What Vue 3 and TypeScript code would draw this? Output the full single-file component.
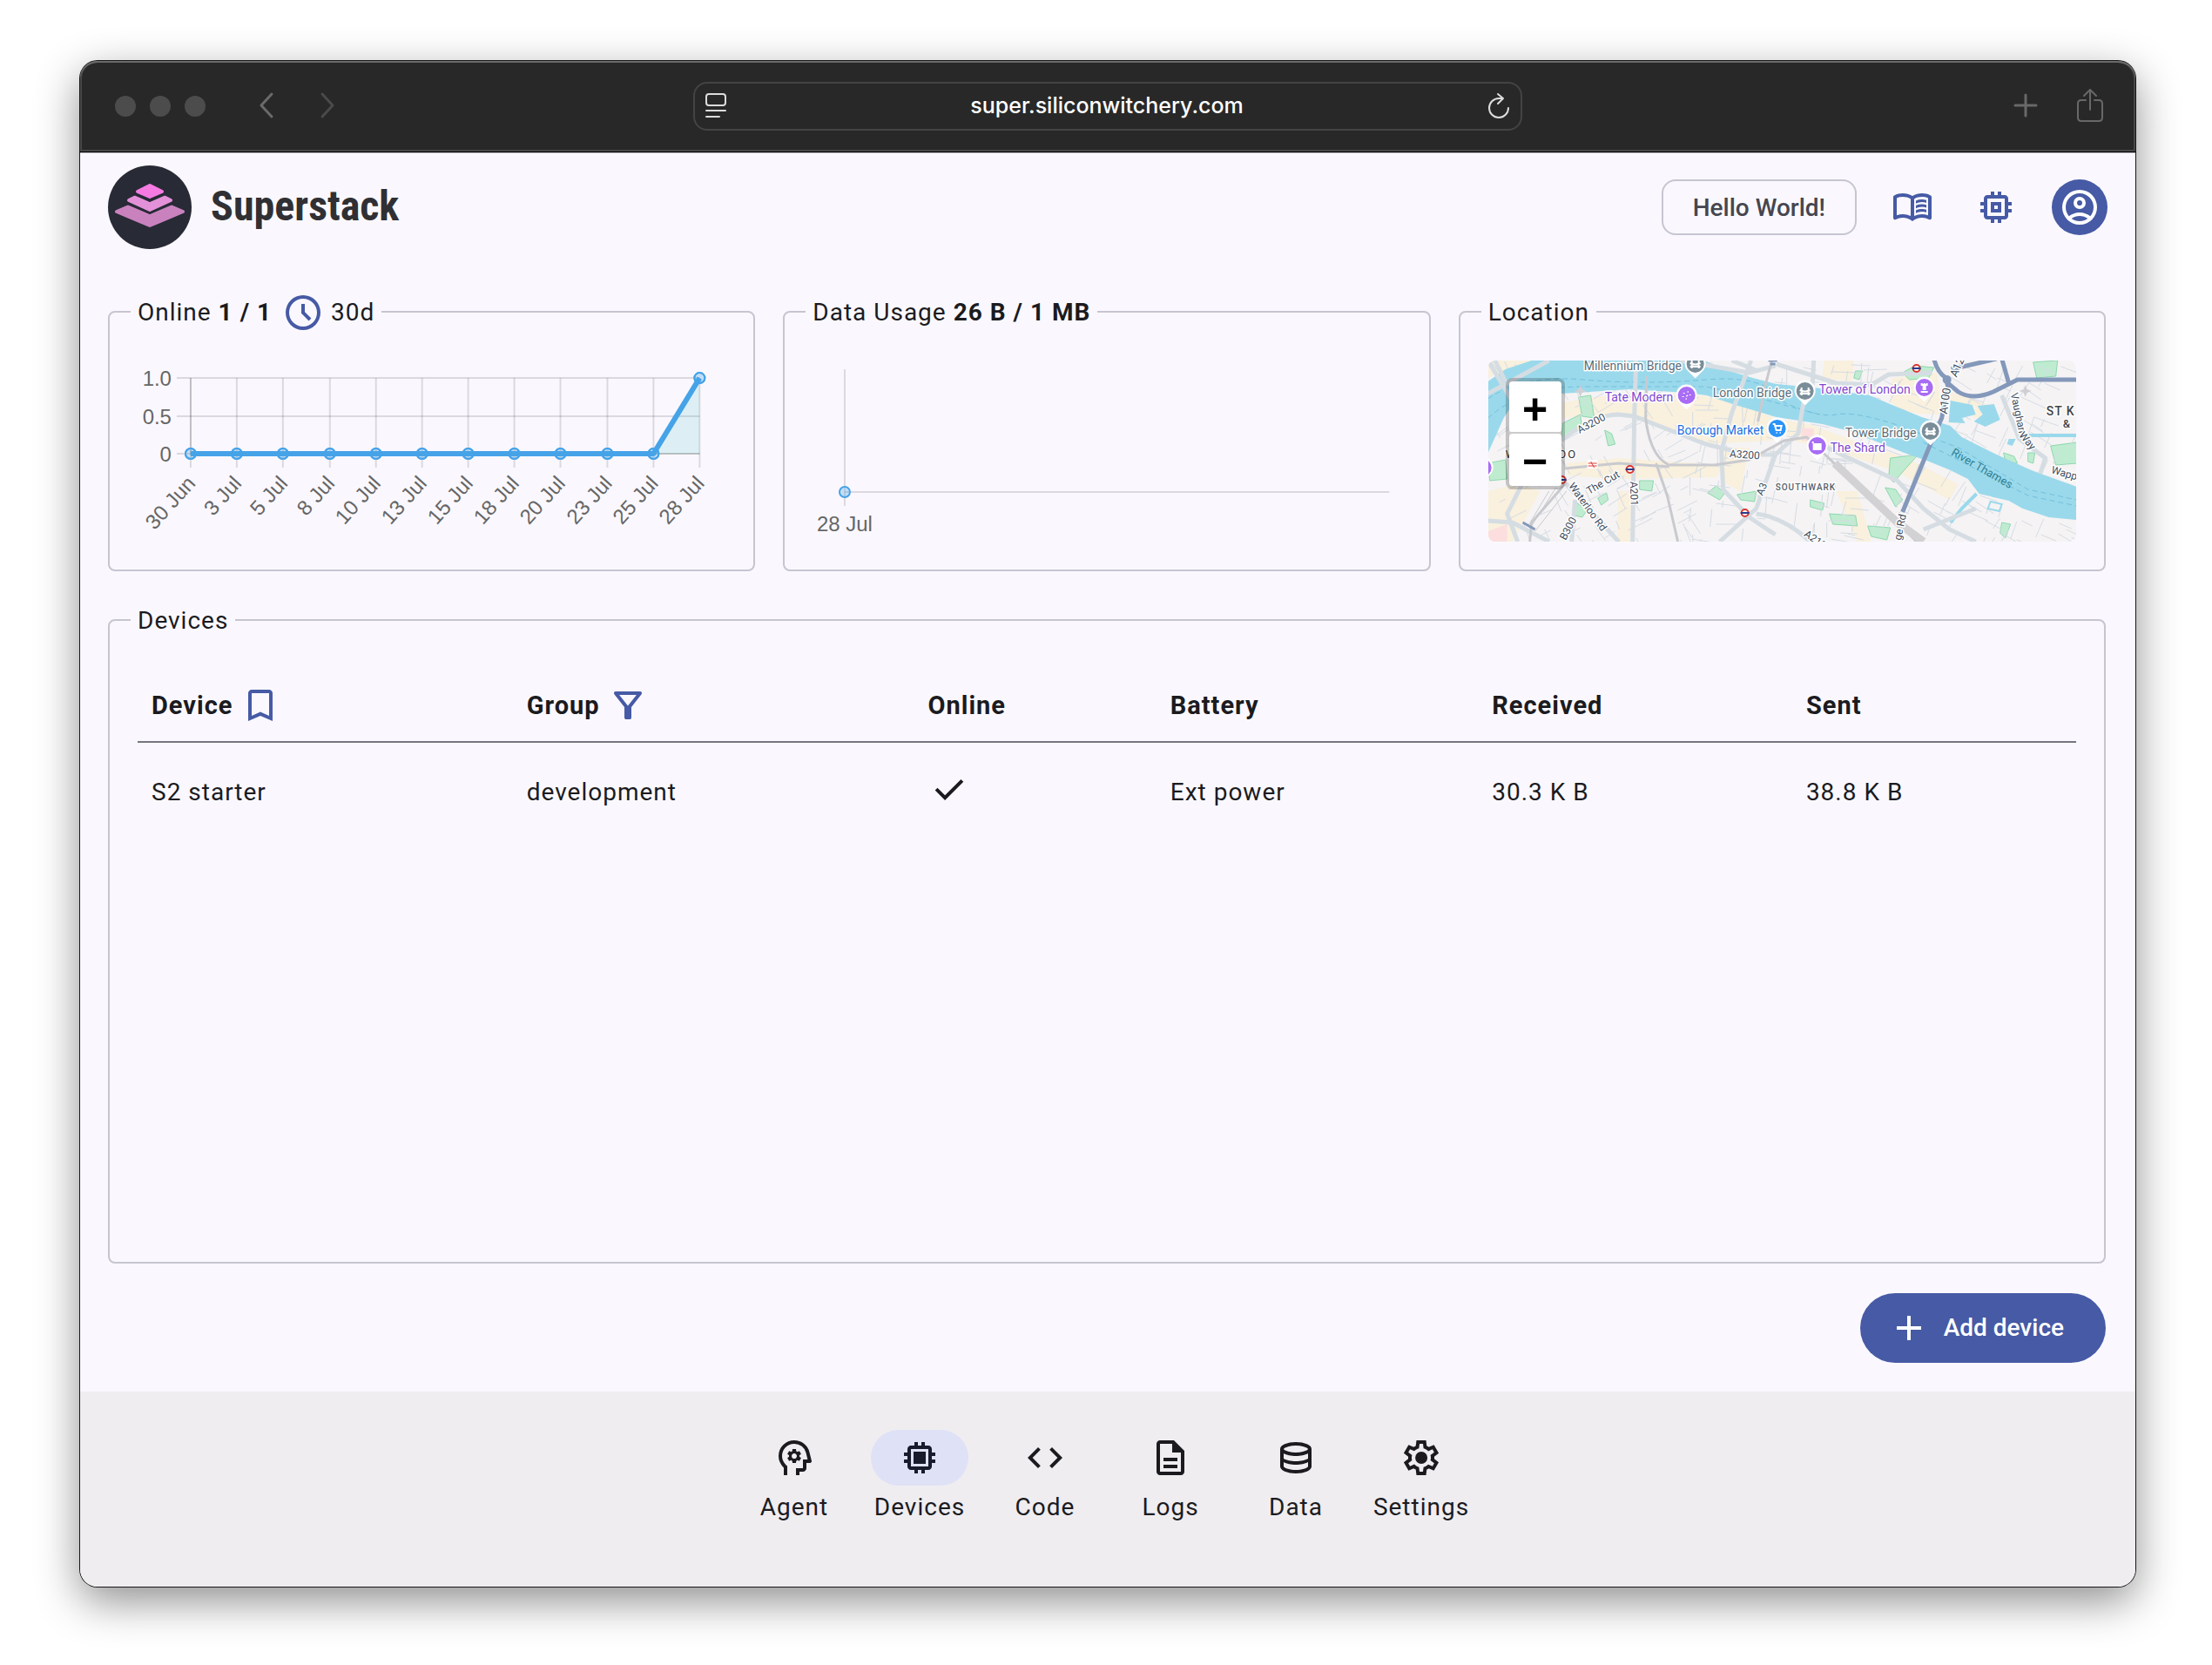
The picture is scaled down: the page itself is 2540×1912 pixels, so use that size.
<script setup lang="ts">
import { ref } from 'vue'

const icons = {
  book: 'M560-564v-68q33-14 67.5-21t72.5-7q26 0 51 4t49 10v64q-24-9-48.5-13.5T700-600q-38 0-73 9.5T560-564Zm0 220v-68q33-14 67.5-21t72.5-7q26 0 51 4t49 10v64q-24-9-48.5-13.5T700-380q-38 0-73 9t-67 27Zm0-110v-68q33-14 67.5-21t72.5-7q26 0 51 4t49 10v64q-24-9-48.5-13.5T700-490q-38 0-73 9.5T560-454ZM260-320q47 0 91.5 10.5T440-278v-394q-41-24-87-36t-93-12q-36 0-71.5 7T120-692v396q35-12 69.5-18t70.5-6Zm260 42q44-21 88.5-31.5T700-320q36 0 70.5 6t69.5 18v-396q-33-14-68.5-21t-71.5-7q-47 0-93 12t-87 36v394Zm-40 118q-48-38-104-59t-116-21q-42 0-82.5 11T100-198q-21 11-40.5-1T40-234v-482q0-11 5.5-21T62-752q46-24 96-36t102-12q58 0 113.5 15T480-740q51-30 106.5-45T700-800q52 0 102 12t96 36q11 5 16.5 15t5.5 21v482q0 23-19.5 35t-40.5 1q-37-20-77.5-31T700-240q-60 0-116 21t-104 59Z',
  memory: 'M360-360v-240h240v240H360Zm80-80h80v-80h-80v80Zm-80 320v-80h-80q-33 0-56.5-23.5T200-280v-80h-80v-80h80v-80h-80v-80h80v-80q0-33 23.5-56.5T280-760h80v-80h80v80h80v-80h80v80h80q33 0 56.5 23.5T760-680v80h80v80h-80v80h80v80h-80v80q0 33-23.5 56.5T680-200h-80v80h-80v-80h-80v80h-80Zm320-160v-400H280v400h400Z',
  memoryFilled: 'M340-340v-280h280v280H340Zm20 220v-80h-80q-33 0-56.5-23.5T200-280v-80h-80v-80h80v-80h-80v-80h80v-80q0-33 23.5-56.5T280-760h80v-80h80v80h80v-80h80v80h80q33 0 56.5 23.5T760-680v80h80v80h-80v80h80v80h-80v80q0 33-23.5 56.5T680-200h-80v80h-80v-80h-80v80h-80Zm320-160v-400H280v400h400Z',
  account: 'M234-276q51-39 114-61.5T480-360q69 0 132 22.5T726-276q35-41 54.5-93T800-480q0-133-93.5-226.5T480-800q-133 0-226.5 93.5T160-480q0 59 19.5 111t54.5 93Zm246-164q-59 0-99.5-40.5T340-580q0-59 40.5-99.5T480-720q59 0 99.5 40.5T620-580q0 59-40.5 99.5T480-440Zm0 360q-83 0-156-31.5T197-197q-54-54-85.5-127T80-480q0-83 31.5-156T197-763q54-54 127-85.5T480-880q83 0 156 31.5T763-763q54 54 85.5 127T880-480q0 83-31.5 156T763-197q-54 54-127 85.5T480-80Zm0-80q53 0 100-15.5t86-44.5q-39-29-86-44.5T480-280q-53 0-100 15.5T294-220q39 29 86 44.5T480-160Zm0-360q26 0 43-17t17-43q0-26-17-43t-43-17q-26 0-43 17t-17 43q0 26 17 43t43 17Z',
  schedule: 'm612-292 56-56-148-148v-184h-80v216l172 172ZM480-80q-83 0-156-31.5T197-197q-54-54-85.5-127T80-480q0-83 31.5-156T197-763q54-54 127-85.5T480-880q83 0 156 31.5T763-763q54 54 85.5 127T880-480q0 83-31.5 156T763-197q-54 54-127 85.5T480-80Zm0-80q133 0 226.5-93.5T800-480q0-133-93.5-226.5T480-800q-133 0-226.5 93.5T160-480q0 133 93.5 226.5T480-160Z',
  bookmark: 'M200-120v-640q0-33 23.5-56.5T280-840h400q33 0 56.5 23.5T760-760v640L480-240 200-120Zm80-122 200-86 200 86v-518H280v518Z',
  filter: 'M440-160q-17 0-28.5-11.5T400-200v-240L168-736q-15-20-4.5-42t36.5-22h560q26 0 36.5 22t-4.5 42L560-440v240q0 17-11.5 28.5T520-160h-80Zm40-308 198-252H282l198 252Z',
  check: 'M382-240 154-468l57-57 171 171 367-367 57 57-424 424Z',
  add: 'M440-440H200v-80h240v-240h80v240h240v80H520v240h-80v-240Z',
  agent: 'M440-360h80l6-50q8-3 14.5-7t11.5-9l46 20 40-68-40-30q2-8 2-16t-2-16l40-30-40-68-46 20q-5-5-11.5-9t-14.5-7l-6-50h-80l-6 50q-8 3-14.5 7t-11.5 9l-46-20-40 68 40 30q-2 8-2 16t2 16l-40 30 40 68 46-20q5 5 11.5 9t14.5 7l6 50Zm40-100q-25 0-42.5-17.5T420-520q0-25 17.5-42.5T480-580q25 0 42.5 17.5T540-520q0 25-17.5 42.5T480-460ZM240-80v-172q-57-52-88.5-121.5T120-520q0-150 105-255t255-105q125 0 221.5 73.5T827-615l52 205q5 19-7 34.5T840-360h-80v120q0 33-23.5 56.5T680-160h-80v80h-80v-160h160v-200h108l-38-155q-23-91-98-148t-172-57q-116 0-198 81t-82 197q0 60 24.5 114t69.5 96l26 24v208h-80Z',
  code: 'M320-240 80-480l240-240 57 57-184 184 183 183-56 56Zm320 0-57-57 184-184-183-183 56-56 240 240-240 240Z',
  logs: 'M320-240h320v-80H320v80Zm0-160h320v-80H320v80ZM240-80q-33 0-56.5-23.5T160-160v-640q0-33 23.5-56.5T240-880h320l240 240v480q0 33-23.5 56.5T720-80H240Zm280-520v-200H240v640h480v-440H520Z',
  data: 'M480-120q-151 0-255.5-46.5T120-280v-400q0-66 105.5-113T480-840q149 0 254.5 47T840-680v400q0 67-104.5 113.5T480-120Zm0-479q89 0 179-25.5T760-679q-11-29-100.5-55T480-760q-91 0-178.5 25.5T200-679q14 30 101.5 55T480-599Zm0 199q42 0 81-4t74.5-11.5q35.5-7.5 67-18.5t57.5-25v-120q-26 14-57.5 25t-67 18.5Q600-528 561-524t-81 4q-42 0-82-4t-75.5-11.5Q287-543 256-554t-56-25v120q25 14 56 25t66.5 18.5Q358-408 398-404t82 4Zm0 200q46 0 93.5-7t87.5-18.5q40-11.5 67-26t32-29.5v-98q-26 14-57.5 25t-67 18.5Q600-328 561-324t-81 4q-42 0-82-4t-75.5-11.5Q287-343 256-354t-56-25v99q5 15 31.5 29t66.5 25.5q40 11.5 88 18.5t94 7Z',
  settings: 'm370-80-16-128q-13-5-24.5-12T307-235l-119 50L78-375l103-78q-1-7-1-13.5v-27q0-6.5 1-13.5L78-585l110-190 119 50q11-8 23-15t24-12l16-128h220l16 128q13 5 24.5 12t22.5 15l119-50 110 190-103 78q1 7 1 13.5v27q0 6.5-2 13.5l103 78-110 190-118-50q-11 8-23 15t-24 12L590-80H370Zm70-80h79l14-106q31-8 57.5-23.5T639-327l99 41 39-68-86-65q5-14 7-29.5t2-31.5q0-16-2-31.5t-7-29.5l86-65-39-68-99 42q-22-23-48.5-38.5T533-694l-13-106h-79l-14 106q-31 8-57.5 23.5T321-633l-99-41-39 68 86 64q-5 15-7 30t-2 32q0 16 2 31t7 30l-86 65 39 68 99-42q22 23 48.5 38.5T427-266l13 106Zm42-180q58 0 99-41t41-99q0-58-41-99t-99-41q-59 0-99.5 41T342-480q0 58 40.5 99t99.5 41Z',
}

const address = ref('super.siliconwitchery.com')

interface NavItem { label: string; icon: string }
const nav: NavItem[] = [
  { label: 'Agent', icon: icons.agent },
  { label: 'Devices', icon: icons.memoryFilled },
  { label: 'Code', icon: icons.code },
  { label: 'Logs', icon: icons.logs },
  { label: 'Data', icon: icons.data },
  { label: 'Settings', icon: icons.settings },
]
const current = ref('Devices')

const devices = [
  { name: 'S2 starter', group: 'development', online: true, battery: 'Ext power', received: '30.3 K B', sent: '38.8 K B' },
]

// Online chart
const days = ['30 Jun', '3 Jul', '5 Jul', '8 Jul', '10 Jul', '13 Jul', '15 Jul', '18 Jul', '20 Jul', '23 Jul', '25 Jul', '28 Jul']
const onlineCounts = [0, 0, 0, 0, 0, 0, 0, 0, 0, 0, 0, 1]
const plot = { left: 61, right: 646, top: 20, bottom: 107 }
const points = onlineCounts.map((v, i) => ({
  x: Math.round(plot.left + (i * (plot.right - plot.left)) / (days.length - 1)),
  y: plot.bottom - v * (plot.bottom - plot.top),
  label: days[i],
}))
const line = points.map(p => `${p.x},${p.y}`).join(' ')
const yTicks = [
  { label: '1.0', y: 20 },
  { label: '0.5', y: 64 },
  { label: '0', y: 107 },
]

// Side streets: short deterministic segments that follow the local street grid
let seed = 11
const rand = () => (seed = (seed * 16807) % 2147483647) / 2147483647
const streets = Array.from({ length: 420 }, () => {
  const x = rand() * 676
  const y = rand() * 208
  const base = x < 230 ? -0.5 : x < 450 ? 0.12 : 0.45
  const a = base + (rand() > 0.5 ? Math.PI / 2 : 0) + (rand() - 0.5) * 0.3
  const l = 8 + rand() * 24
  return `M${x.toFixed(0)} ${y.toFixed(0)}l${(Math.cos(a) * l).toFixed(0)} ${(Math.sin(a) * l).toFixed(0)}`
}).join('')

const shopping = [
  'M86 48L140 40 230 38 270 44 330 66 326 92 250 96 210 78 150 62 86 66Z',
  'M0 150L34 142 60 150 28 208 0 208Z',
  'M60 0L0 0 0 20 28 8Z',
  'M90 118L150 112 240 118 270 122 262 134 150 136 92 132Z',
  'M270 100L300 100 290 150 270 140Z',
  'M150 150L165 150 163 208 148 208Z',
  'M326 66L372 74 420 92 480 112 540 142 530 160 470 128 400 104 350 92Z',
  'M464 20L516 14 520 62 480 60 462 48Z',
  'M400 150L424 150 440 208 424 208Z',
  'M386 0L420 0 418 24 384 20Z',
  'M530 36L572 50 566 66 556 66 560 54 530 46Z',
]
const parks = [
  'M104 42L118 40 122 66 108 64Z', 'M86 72L106 62 108 78 84 90Z', 'M134 80L142 84 146 96 138 98Z',
  'M0 118L20 114 22 136 2 138Z', 'M174 138L190 138 188 150 174 148Z', 'M126 158L136 152 138 160 130 166Z',
  'M100 162L114 172 108 180 100 178Z', 'M252 152L262 144 272 152 266 160Z', 'M286 154L308 150 306 162 290 160Z',
  'M370 160L386 164 384 172 370 168Z', 'M392 176L422 178 424 190 396 188Z', 'M436 190L462 192 458 206 440 202Z',
  'M462 112L494 108 476 128 466 140 460 134Z', 'M456 146L468 148 476 160 468 168Z', 'M476 14L490 6 512 8 506 20 484 22Z',
  'M626 2L654 0 652 18 630 20Z', 'M646 98L676 94 676 118 652 120Z', 'M592 106L604 110 608 118 594 116Z',
  'M590 186L600 188 594 204 588 198Z', 'M422 12L430 12 426 22 420 20Z', 'M620 106L628 106 626 118 620 116Z',
]
const mainRoads = [
  'M0 38L70 0', 'M0 0L30 50', 'M8 0L20 24', 'M170 0L168 64 166 208', 'M84 92Q120 62 150 62L168 64 250 96 300 108 330 108',
  'M302 0L280 60 268 104 270 148 300 180 330 200', 'M330 108L356 84 362 50 372 40 374 0',
  'M330 108L308 170 266 208', 'M308 176Q340 180 370 208', 'M88 140L150 208', 'M40 140L22 176 34 208',
  'M0 184L28 186 70 208', 'M331 4L400 26 440 28 460 16 510 14', 'M370 90L410 110 470 138 500 170 530 194 560 208',
  'M500 194L560 170', 'M220 0L300 14 330 6', 'M100 160L96 208', 'M634 130L640 112 610 90 590 40', 'M280 0L310 12',
]
const thickRoads = [
  'M512 -2Q516 14 526 20L528 30 521 66 508 96 476 174', 'M528 26L540 36Q556 46 580 36L608 22 676 22', 'M590 -2L598 26', 'M532 10L584 -2',
]
const rails = [
  'M182 18L181 66Q186 110 208 120L260 120 300 114 340 92 366 88 410 130 450 164 492 208', 'M88 124L150 118 208 122',
  'M193 118L206 156 218 208', 'M48 208L50 186 90 140', 'M326 0L318 30 310 70',
]

interface Place { text: string; x: number; y: number; color: string; size?: number; spacing?: string; rotate?: number; weight?: number }
const violet = '#8048d0'
const slate = '#5a6f7c'
const ink = '#404c5c'
const places: Place[] = [
  { text: 'Millennium Bridge', x: 110, y: 11, color: slate },
  { text: 'Tate Modern', x: 134, y: 47, color: violet },
  { text: 'London Bridge', x: 258, y: 42, color: slate },
  { text: 'Borough Market', x: 217, y: 85, color: '#1a6fe0' },
  { text: 'Tower of London', x: 380, y: 38, color: violet },
  { text: 'Tower Bridge', x: 410, y: 88, color: slate },
  { text: 'The Shard', x: 393, y: 105, color: violet },
  { text: 'SOUTHWARK', x: 330, y: 149, color: '#56606a', size: 10, weight: 500, spacing: '1px' },
  { text: 'WATERLOO', x: 20, y: 112, color: '#333', size: 13, spacing: '2px' },
  { text: 'ST K', x: 641, y: 63, color: '#444', size: 14, weight: 500, spacing: '1px' },
  { text: '&', x: 660, y: 77, color: '#444', size: 13, weight: 500 },
  { text: 'A3200', x: 105, y: 84, color: ink, size: 12, rotate: -28 },
  { text: 'A3200', x: 277, y: 111, color: ink, size: 12, rotate: 4 },
  { text: 'The Cut', x: 116, y: 154, color: ink, size: 12, rotate: -30 },
  { text: 'A201', x: 163, y: 139, color: ink, size: 12, rotate: 88 },
  { text: 'Waterloo Rd', x: 92, y: 144, color: ink, size: 12, rotate: 54 },
  { text: 'B300', x: 89, y: 207, color: ink, size: 12, rotate: -62 },
  { text: 'A3', x: 315, y: 156, color: ink, size: 12, rotate: -66 },
  { text: 'A219', x: 362, y: 201, color: ink, size: 12, rotate: 34 },
  { text: 'A100', x: 527, y: 62, color: ink, size: 13, rotate: -82 },
  { text: 'A12', x: 538, y: 20, color: ink, size: 13, rotate: -66 },
  { text: 'Vaughan', x: 600, y: 38, color: ink, size: 12, rotate: 78 },
  { text: 'Way', x: 609, y: 86, color: ink, size: 12, rotate: 50 },
  { text: 'Wappi', x: 646, y: 129, color: ink, size: 12, rotate: 16 },
  { text: 'ge Rd', x: 474, y: 207, color: ink, size: 12, rotate: -78 },
]
const pins = [
  { x: 238, y: 4, color: '#7a8e99', kind: 'bridge' },
  { x: 228, y: 40, color: '#a86cf5', kind: 'palette' },
  { x: 364, y: 35, color: '#7a8e99', kind: 'bridge' },
  { x: 332, y: 78, color: '#2a93f8', kind: 'cart' },
  { x: 378, y: 98, color: '#a86cf5', kind: 'camera' },
  { x: 501, y: 31, color: '#a86cf5', kind: 'tower' },
  { x: 508, y: 81, color: '#7a8e99', kind: 'bridge' },
  { x: -6, y: 123, color: '#a86cf5', kind: 'none' },
]
const pinGlyphs: Record<string, string> = {
  bridge: 'M-4-4V5M4-4V5M-6 3H6M-6-1Q0 2 6-1',
  palette: 'M-3-3L-3-2M1-4L2-4M4-1L4 0M-4 1L-4 2M-1 4L0 4M0 0L1 1',
  cart: 'M-5-5H-3L-1 2H4L5-3H-2M-1 5H0M3 5H4',
  camera: 'M-4-2H4V4H-4ZM-2 0H2V2H-2ZM-5-5V-3',
  tower: 'M-3-5V-3H3V-5M0-5V-3M-1-2V3M1-2V3M-4 5H4',
  none: '',
}
const stations = [
  { x: 163, y: 125 }, { x: 85, y: 137 }, { x: 295, y: 175 }, { x: 492, y: 9 },
]
</script>

<template>
  <div class="desktop">
    <div class="window">
      <div class="chrome">
        <div class="chrome-side">
          <span class="light"></span><span class="light"></span><span class="light"></span>
          <button class="bare back" type="button" aria-label="Back">
            <svg width="24" height="32" viewBox="0 0 24 32"><path d="M18 3L6 16 18 29" fill="none" stroke="#6a6a6a" stroke-width="3" stroke-linecap="round" stroke-linejoin="round" /></svg>
          </button>
          <button class="bare" type="button" aria-label="Forward">
            <svg width="24" height="32" viewBox="0 0 24 32"><path d="M6 3L18 16 6 29" fill="none" stroke="#4a4a4a" stroke-width="3" stroke-linecap="round" stroke-linejoin="round" /></svg>
          </button>
        </div>
        <div class="address">
          <button class="bare" type="button" aria-label="Page menu">
            <svg width="24" height="30" viewBox="0 0 24 30" fill="none" stroke="#dcdcdc" stroke-width="2" stroke-linecap="round"><rect x="1" y="2" width="22" height="13" rx="3" /><path d="M1 21H23M1 28H16" /></svg>
          </button>
          <input v-model="address" type="text" aria-label="Address" spellcheck="false" />
          <button class="bare" type="button" aria-label="Reload">
            <svg width="26" height="30" viewBox="0 0 26 30" fill="none" stroke="#dcdcdc" stroke-width="2" stroke-linecap="round" stroke-linejoin="round"><path d="M13 7A11 11 0 1 0 24 18M12 2L18 7 12 13M13 7H17" /></svg>
          </button>
        </div>
        <div class="chrome-side chrome-end">
          <button class="bare" type="button" aria-label="New tab">
            <svg width="28" height="28" viewBox="0 0 28 28"><path d="M14 2V26M2 14H26" stroke="#686868" stroke-width="3" stroke-linecap="round" /></svg>
          </button>
          <button class="bare" type="button" aria-label="Share">
            <svg width="32" height="40" viewBox="0 0 32 40" fill="none" stroke="#686868" stroke-width="2" stroke-linecap="round" stroke-linejoin="round"><path d="M11 14H6Q2 14 2 18V34Q2 38 6 38H26Q30 38 30 34V18Q30 14 26 14H21M16 25V3M9 9L16 2 23 9" /></svg>
          </button>
        </div>
      </div>

      <div class="page">
        <header class="topbar">
          <svg class="logo" viewBox="0 0 96 96" aria-hidden="true">
            <circle cx="48" cy="48" r="48" fill="#282a36" />
            <g stroke-width="4" stroke-linejoin="round">
              <path d="M10 53L24 47 48 58 72 47 86 53 48 69Z" fill="#c982be" stroke="#c982be" />
              <path d="M24 40L32 36 48 44 64 36 72 40 48 51Z" fill="#e391d8" stroke="#e391d8" />
              <path d="M34 30L48 23 62 30 48 36Z" fill="#f57ae1" stroke="#f57ae1" />
            </g>
            <path d="M20 43L48 55 76 43M30 33L48 41 66 33" fill="none" stroke="#282a36" stroke-width="2" />
          </svg>
          <h1>Superstack</h1>
          <button class="chip" type="button">Hello World!</button>
          <button class="round" type="button" aria-label="Documentation"><svg class="icon" viewBox="0 -960 960 960"><path :d="icons.book" /></svg></button>
          <button class="round" type="button" aria-label="Devices"><svg class="icon" viewBox="0 -960 960 960"><path :d="icons.memory" /></svg></button>
          <button class="round filled" type="button" aria-label="Account"><svg class="icon" viewBox="0 -960 960 960"><path :d="icons.account" /></svg></button>
        </header>

        <main>
          <div class="cards">
            <fieldset>
              <legend>
                <span>Online <b>1 / 1</b></span>
                <button class="range" type="button"><svg class="icon" viewBox="0 -960 960 960"><path :d="icons.schedule" /></svg>30d</button>
              </legend>
              <svg class="chart" viewBox="0 0 676 208" role="img" aria-label="Devices online">
                <g class="grid">
                  <path v-for="t in yTicks" :key="t.label" :d="`M45 ${t.y}H646`" />
                  <path v-for="p in points" :key="p.label" :d="`M${p.x} 20V123`" />
                  <path d="M61 20V107H646" />
                </g>
                <polygon :points="`${line} 646,107`" fill="#4bc0c0" fill-opacity=".16" />
                <g class="point">
                  <circle v-for="p in points" :key="p.label" :cx="p.x" :cy="p.y" r="6" />
                </g>
                <polyline :points="line" fill="none" stroke="#46a3e8" stroke-width="6" stroke-linejoin="round" />
                <g class="point ring">
                  <circle v-for="p in points" :key="p.label" :cx="p.x" :cy="p.y" r="6" />
                </g>
                <text v-for="t in yTicks" :key="t.label" x="39" :y="t.y + 9" text-anchor="end">{{ t.label }}</text>
                <text v-for="p in points" :key="p.label" :transform="`translate(${p.x} 136) rotate(-48)`" y="9" text-anchor="end">{{ p.label }}</text>
              </svg>
            </fieldset>

            <fieldset>
              <legend><span>Data Usage <b>26 B / 1 MB</b></span></legend>
              <svg class="chart" viewBox="0 0 676 208" role="img" aria-label="Data usage">
                <g class="grid"><path d="M37 10V167" /><path d="M37 151H663" /></g>
                <g class="point"><circle cx="37" cy="151" r="6" /></g>
                <text x="37" y="196" text-anchor="middle">28 Jul</text>
              </svg>
            </fieldset>

            <fieldset>
              <legend>Location</legend>
              <div class="map">
                <svg viewBox="0 0 676 208" preserveAspectRatio="xMidYMid slice" role="img" aria-label="Map of London">
                  <rect width="676" height="208" fill="#f5f3f4" />
                  <path v-for="d in shopping" :key="d" :d="d" fill="#f9f0dd" />
                  <path v-for="d in parks" :key="d" :d="d" fill="#bfecd0" stroke="#8fd6b0" />
                  <path :d="streets" stroke="#d5dce4" fill="none" />
                  <path d="M360 78h14v14h-14zM0 196l22-8v20H0z" fill="#fbdedd" />
                  <path d="M0 24L20 10 50 0H248L271 10 304 20 331 27 374 31 438 40 464 51 498 65 531 75 544 88 584 108 624 126 676 145V183L644 180 614 170 598 161 564 153 551 136 531 126 504 115 478 106 441 91 411 80 384 73 331 65 284 51 251 40 228 37 164 33 84 38 30 48 18 66 0 106Z" fill="#9ad9eb" />
                  <path d="M531 46L556 51 560 62 544 66 548 72 529 71ZM562 52L581 50 588 68 571 76 558 70 568 62ZM598 90L606 90 602 98 596 96Z" fill="#9ad9eb" />
                  <path d="M561 153L544 170 531 186M620 86H676" fill="none" stroke="#9ad9eb" stroke-width="4" />
                  <path d="M574 170l3-8 13 3-3 8z" fill="none" stroke="#9ad9eb" stroke-width="2" />
                  <path d="M0 44Q40 16 110 22T250 22 340 48Q380 66 400 62T470 74L540 100 620 148 676 160M0 66Q40 30 110 30T250 30L300 40 380 62M500 94L620 155 676 167" fill="none" stroke="#72bfdc" stroke-dasharray="6 4" />
                  <g fill="none" stroke="#d5dde3" stroke-linejoin="round">
                    <path v-for="d in mainRoads" :key="d" :d="d" stroke-width="5" />
                  </g>
                  <g fill="none" stroke="#c9cacf" stroke-linejoin="round">
                    <path v-for="d in rails" :key="d" :d="d" stroke-width="3" />
                    <path d="M398 118L470 186 500 208" stroke-width="9" stroke="#d2d2d5" />
                    <path d="M50 190L78 146M54 196L90 150M46 190L70 150" />
                  </g>
                  <g fill="none" stroke="#8398ba" stroke-linejoin="round">
                    <path v-for="d in thickRoads" :key="d" :d="d" stroke-width="5" />
                    <path d="M322 0H332M324 4H330M40 186L54 194" stroke-width="3" />
                  </g>
                  <circle cx="527" cy="22" r="5" fill="#8398ba" />
                  <path d="M106 28l2 5 5 2-5 2-2 5-2-5-5-2 5-2zM617 28l2 5 5 2-5 2-2 5-2-5-5-2 5-2z" fill="#d0d0d4" />
                  <g v-for="s in stations" :key="s.x" fill="none">
                    <circle :cx="s.x" :cy="s.y" r="4" fill="#fff" stroke="#d8372f" stroke-width="2" />
                    <path :d="`M${s.x - 5} ${s.y}h10`" stroke="#2a3a8c" stroke-width="2" />
                  </g>
                  <rect x="114" y="114" width="12" height="10" fill="#fff" /><path d="M115 118H125M115 121H125M118 116L122 123" stroke="#e03a34" />
                  <text
                    v-for="(p, i) in places" :key="i" class="place"
                    :transform="`translate(${p.x} ${p.y}) rotate(${p.rotate ?? 0})`"
                    :fill="p.color" :font-size="p.size ?? 14" :font-weight="p.weight ?? 400" :letter-spacing="p.spacing ?? '0'"
                  >{{ p.text }}</text>
                  <text class="water" transform="translate(531 108) rotate(30)">River Thames</text>
                  <g v-for="(p, i) in pins" :key="i" :transform="`translate(${p.x} ${p.y})`">
                    <path d="M0 15L-8 7A11 11 0 1 1 8 7Z" fill="#fff" stroke="#fff" stroke-width="2" stroke-linejoin="round" />
                    <circle r="10" :fill="p.color" />
                    <path :d="pinGlyphs[p.kind]" fill="none" stroke="#fff" stroke-width="2" />
                  </g>
                </svg>
                <div class="zoom">
                  <button type="button" aria-label="Zoom in">+</button>
                  <button type="button" aria-label="Zoom out">−</button>
                </div>
              </div>
            </fieldset>
          </div>

          <fieldset class="devices">
            <legend>Devices</legend>
            <table>
              <colgroup><col class="c-device" /><col class="c-group" /><col class="c-online" /><col class="c-battery" /><col class="c-received" /><col /></colgroup>
              <thead>
                <tr>
                  <th scope="col"><div class="head">Device<button class="bare" type="button" aria-label="Sort devices"><svg class="icon" viewBox="0 -960 960 960"><path :d="icons.bookmark" /></svg></button></div></th>
                  <th scope="col"><div class="head">Group<button class="bare" type="button" aria-label="Filter groups"><svg class="icon" viewBox="0 -960 960 960"><path :d="icons.filter" /></svg></button></div></th>
                  <th scope="col">Online</th>
                  <th scope="col">Battery</th>
                  <th scope="col">Received</th>
                  <th scope="col">Sent</th>
                </tr>
              </thead>
              <tbody>
                <tr v-for="d in devices" :key="d.name">
                  <td>{{ d.name }}</td>
                  <td>{{ d.group }}</td>
                  <td><svg v-if="d.online" class="icon tick" viewBox="0 -960 960 960" role="img" aria-label="Online"><path :d="icons.check" /></svg></td>
                  <td>{{ d.battery }}</td>
                  <td>{{ d.received }}</td>
                  <td>{{ d.sent }}</td>
                </tr>
              </tbody>
            </table>
          </fieldset>

          <div class="actions">
            <button class="primary" type="button"><svg class="icon" viewBox="0 -960 960 960"><path :d="icons.add" /></svg>Add device</button>
          </div>
        </main>
      </div>

      <nav class="tabs">
        <a v-for="item in nav" :key="item.label" href="#" :class="{ active: item.label === current }" @click.prevent="current = item.label">
          <span class="pill"><svg class="icon" viewBox="0 -960 960 960"><path :d="item.icon" /></svg></span>
          <span>{{ item.label }}</span>
        </a>
      </nav>
    </div>
  </div>
</template>

<style>
body {
  margin: 0;
  background: #fff;
}
</style>

<style scoped>
* {
  box-sizing: border-box;
}
.desktop {
  display: flex;
  min-height: 100vh;
  padding: 70px 88px 90px 92px;
  overflow: hidden;
  font: 400 28px/40px Roboto, sans-serif;
  color: #1b1b1f;
}
.window {
  flex: 1;
  min-width: 0;
  display: flex;
  flex-direction: column;
  border-radius: 20px;
  box-shadow: 0 0 0 1px #161616, 0 16px 50px rgba(0, 0, 0, 0.45);
}
button {
  font: inherit;
  color: inherit;
  border: 0;
  padding: 0;
  background: none;
  cursor: pointer;
}
.bare {
  display: flex;
}
.icon {
  width: 48px;
  height: 48px;
  flex: none;
  display: block;
  fill: currentColor;
}

/* Browser chrome */
.chrome {
  display: grid;
  grid-template-columns: 1fr 952px 1fr;
  align-items: center;
  height: 105px;
  padding: 0 36px;
  border-bottom: 1px solid #000;
  border-radius: 20px 20px 0 0;
  background: #282828;
  box-shadow: inset 0 2px #6a6a6a, inset 0 0 0 2px #484848;
}
.chrome-side {
  display: flex;
  align-items: center;
  gap: 16px;
  padding-left: 4px;
}
.light {
  width: 24px;
  height: 24px;
  border-radius: 50%;
  background: #4c4c4c;
}
.chrome .bare,
.address input {
  margin-bottom: 2px;
}
.chrome .back {
  margin-left: 42px;
  margin-right: 30px;
}
.chrome-end {
  justify-content: flex-end;
  gap: 44px;
}
.address {
  display: flex;
  align-items: center;
  height: 56px;
  padding: 0 12px;
  border: 2px solid #444;
  border-radius: 16px;
}
.address input {
  flex: 1;
  min-width: 0;
  border: 0;
  padding: 0;
  background: none;
  color: #fff;
  font: 500 25px/40px Inter, sans-serif;
  text-align: center;
}

/* Page */
.page {
  flex: 1;
  display: flex;
  flex-direction: column;
  padding: 14px 32px 33px;
  border-top: 1px solid #b9b8bc;
  background: #faf8fe;
}
main {
  flex: 1;
  display: flex;
  flex-direction: column;
  padding-right: 2px;
}
.topbar {
  display: flex;
  align-items: center;
  gap: 32px;
  margin-bottom: 48px;
}
.logo {
  width: 96px;
  height: 96px;
}
h1 {
  flex: 1;
  margin: 0 0 0 -10px;
  padding-bottom: 2px;
  font: 700 48px/64px "Roboto Condensed", "Liberation Sans Narrow", Roboto, sans-serif;
  color: #303034;
}
.chip {
  height: 64px;
  padding: 2px 34px 0;
  border: 2px solid #c6c5d0;
  border-radius: 16px;
  font-weight: 500;
  color: #45464f;
}
.round {
  display: grid;
  place-items: center;
  width: 64px;
  height: 64px;
  border-radius: 50%;
  color: #465aa5;
}
.round.filled {
  background: #465aa5;
  color: #fff;
}
fieldset {
  min-width: 0;
  margin: 0;
  padding: 32px;
  border: 2px solid #c6c5d0;
  border-radius: 8px;
  letter-spacing: 1px;
}
legend {
  display: flex;
  align-items: center;
  gap: 12px;
  height: 48px;
  margin-left: -8px;
  padding: 2px 8px 0;
}
.range {
  display: flex;
  align-items: center;
  gap: 8px;
  letter-spacing: inherit;
}
.range .icon {
  color: #465aa5;
}
.cards {
  display: grid;
  grid-template-columns: repeat(3, 1fr);
  gap: 32px;
  margin-bottom: 32px;
}
.chart {
  display: block;
  width: 100%;
  height: 208px;
  overflow: visible;
  letter-spacing: 0;
}
.chart text {
  font: 24px "Liberation Sans", Arial, sans-serif;
  fill: #666;
}
.grid path {
  fill: none;
  stroke: #000;
  stroke-opacity: 0.12;
  stroke-width: 2;
}
.point circle {
  fill: #46a3e8;
  fill-opacity: 0.3;
  stroke: #46a3e8;
  stroke-width: 2;
}
.ring circle {
  fill: none;
}

/* Map */
.map {
  position: relative;
  height: 208px;
  border-radius: 8px;
  overflow: hidden;
  letter-spacing: 0;
}
.map > svg {
  display: block;
  width: 100%;
  height: 100%;
}
.place {
  paint-order: stroke;
  stroke: #fff;
  stroke-width: 3px;
  stroke-linejoin: round;
}
.water {
  font-size: 13px;
  fill: #2f7f93;
}
.zoom {
  position: absolute;
  top: 20px;
  left: 20px;
  display: flex;
  flex-direction: column;
  border: 4px solid rgba(0, 0, 0, 0.2);
  border-radius: 8px;
  background: #ccc;
  background-clip: padding-box;
}
.zoom button {
  width: 60px;
  height: 60px;
  padding-top: 4px;
  border-radius: 4px;
  background: #fff;
  color: #000;
  font: 700 50px/56px "Liberation Sans", Arial, sans-serif;
}
.zoom button:first-child {
  border-bottom: 2px solid #ccc;
}

/* Devices */
.devices {
  flex: 1;
}
table {
  width: 100%;
  table-layout: fixed;
  border-collapse: separate;
  border-spacing: 0;
}
.c-device {
  width: 19.35%;
}
.c-group {
  width: 20.7%;
}
.c-online {
  width: 12.5%;
}
.c-battery {
  width: 16.6%;
}
.c-received {
  width: 16.2%;
}
th,
td {
  padding: 0 16px;
  text-align: left;
}
th {
  height: 85px;
  border-bottom: 2px solid #767680;
  font-size: 29px;
  font-weight: 700;
}
td {
  height: 112px;
  padding-top: 2px;
}
.tick {
  margin-bottom: 6px;
}
.head {
  display: flex;
  align-items: center;
  gap: 8px;
}
.head .icon {
  color: #465aa5;
}
.actions {
  display: flex;
  justify-content: flex-end;
  padding-top: 34px;
}
.primary {
  display: flex;
  align-items: center;
  gap: 16px;
  height: 80px;
  padding: 0 48px 0 32px;
  border-radius: 40px;
  background: #465aa5;
  color: #fff;
  font-weight: 500;
}

/* Bottom navigation */
.tabs {
  display: flex;
  justify-content: center;
  gap: 32px;
  min-height: 224px;
  padding-top: 44px;
  border-radius: 0 0 20px 20px;
  background: #efedf0;
  letter-spacing: 1px;
}
.tabs a {
  display: flex;
  flex-direction: column;
  align-items: center;
  gap: 5px;
  width: 112px;
  color: inherit;
  text-decoration: none;
}
.pill {
  display: grid;
  place-items: center;
  width: 112px;
  height: 64px;
  border-radius: 32px;
}
.active .pill {
  background: #dfe1f6;
  color: #171b2c;
}
</style>
